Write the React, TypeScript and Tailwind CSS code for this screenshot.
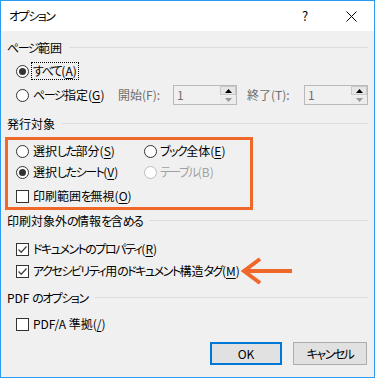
import React from "react";

const jp = (s: string) =>
  s.split(/([\u3040-\u30ff]+)/).map((p, i) =>
    i % 2 === 1 ? (
      <span key={i} className="tracking-[-1.5px]">
        {p}
      </span>
    ) : (
      <React.Fragment key={i}>{p}</React.Fragment>
    )
  );

const Radio = ({ checked = false, disabled = false }: { checked?: boolean; disabled?: boolean }) => (
  <span
    className={`flex h-[13px] w-[13px] shrink-0 items-center justify-center rounded-full border bg-white ${
      disabled ? "border-[#bcbcbc]" : "border-[#333333]"
    }`}
  >
    {checked && <span className="h-[7px] w-[7px] rounded-full bg-[#333333]" />}
  </span>
);

const Check = ({ checked = false }: { checked?: boolean }) => (
  <span className="flex h-[13px] w-[13px] shrink-0 items-center justify-center border border-[#333333] bg-white">
    {checked && (
      <svg width="11" height="11" viewBox="0 0 11 11">
        <polyline points="1.5,5.5 4.2,8.2 9.5,2.5" fill="none" stroke="#444" strokeWidth="1.3" />
      </svg>
    )}
  </span>
);

const U = ({ children }: { children: React.ReactNode }) => (
  <span className="underline decoration-1 underline-offset-[2px]">{children}</span>
);

const Header = ({ text, className = "" }: { text: string; className?: string }) => (
  <div className={`flex h-[16px] items-start ${className}`}>
    <span className="whitespace-nowrap">{jp(text)}</span>
    <span className="ml-[7px] mt-[7px] h-px flex-1 bg-[#dcdcdc]" />
  </div>
);

const Spin = () => (
  <div className="flex h-[20px] w-[64px] border border-[#b9b9b9] bg-[#f0f0f0]">
    <span className="flex-1 pl-[3px] pt-[1px] text-[#6d6d6d]">1</span>
    <div className="flex w-[16px] flex-col gap-px">
      <div className="flex h-[9px] items-center justify-center border border-[#c9c9c9] bg-[#e6e6e6]">
        <svg width="7" height="4" viewBox="0 0 7 4">
          <polygon points="0,4 7,4 3.5,0" fill="#000" />
        </svg>
      </div>
      <div className="flex h-[8px] items-center justify-center bg-[#ececec]">
        <svg width="7" height="4" viewBox="0 0 7 4">
          <polygon points="0,0 7,0 3.5,4" fill="#9a9a9a" />
        </svg>
      </div>
    </div>
  </div>
);

export default function App() {
  return (
    <div className="relative h-[378px] w-[375px] overflow-hidden border border-[#2b9bf2] bg-[#f0f0f0] font-['Noto_Sans_CJK_JP',sans-serif] text-[12px] leading-[16px] text-black [font-feature-settings:'palt']">
      {/* title bar */}
      <div className="flex h-[30px] items-center bg-white">
        <span className="pl-[8px]">{jp("オプション")}</span>
        <div className="ml-auto flex h-full">
          <div className="flex w-[46px] items-center justify-center text-[13px]">?</div>
          <div className="flex w-[46px] items-center justify-center">
            <svg width="11" height="11" viewBox="0 0 11 11">
              <path d="M0.5 0.5 L10.5 10.5 M10.5 0.5 L0.5 10.5" stroke="#000" strokeWidth="1" />
            </svg>
          </div>
        </div>
      </div>

      {/* body */}
      <div className="flex flex-col px-[6px]">
        <Header className="mt-[9px]" text="ページ範囲" />

        <div className="mt-[5px] flex h-[20px] items-center pl-[9px]">
          <Radio checked />
          <span className="ml-[2px] border border-dotted border-black px-[1px] leading-[16px]">
            {jp("すべて(")}
            <U>A</U>)
          </span>
        </div>

        <div className="mt-[4px] flex h-[20px] items-center pl-[9px]">
          <Radio />
          <span className="ml-[4px] w-[85px] whitespace-nowrap">
            {jp("ページ指定(")}
            <U>G</U>)
          </span>
          <span className="w-[55px] whitespace-nowrap text-[#6d6d6d]">開始(F):</span>
          <Spin />
          <span className="ml-[10px] w-[57px] whitespace-nowrap text-[#6d6d6d]">終了(T):</span>
          <Spin />
        </div>

        <Header className="mt-[11px]" text="発行対象" />

        <div className="mt-[9px] flex h-[20px] items-center pl-[9px]">
          <Radio />
          <span className="ml-[4px] w-[111px] whitespace-nowrap">
            {jp("選択した部分(")}
            <U>S</U>)
          </span>
          <Radio />
          <span className="ml-[3px] whitespace-nowrap">
            {jp("ブック全体(")}
            <U>E</U>)
          </span>
        </div>

        <div className="mt-[1px] flex h-[20px] items-center pl-[9px]">
          <Radio checked />
          <span className="ml-[4px] w-[111px] whitespace-nowrap">
            {jp("選択したシート(")}
            <U>V</U>)
          </span>
          <Radio disabled />
          <span className="ml-[3px] whitespace-nowrap text-[#a0a0a0]">{jp("テーブル(B)")}</span>
        </div>

        <div className="mt-[4px] flex h-[20px] items-center pl-[9px]">
          <Check />
          <span className="ml-[4px] whitespace-nowrap">
            {jp("印刷範囲を無視(")}
            <U>O</U>)
          </span>
        </div>

        <Header className="mt-[7px]" text="印刷対象外の情報を含める" />

        <div className="mt-[10px] flex h-[20px] items-center pl-[9px]">
          <Check checked />
          <span className="ml-[4px] whitespace-nowrap">
            {jp("ドキュメントのプロパティ(")}
            <U>R</U>)
          </span>
        </div>

        <div className="mt-[2px] flex h-[20px] items-center pl-[9px]">
          <Check checked />
          <span className="ml-[4px] whitespace-nowrap">
            {jp("アクセシビリティ用のドキュメント構造タグ(")}
            <U>M</U>)
          </span>
        </div>

        <Header className="mt-[9px]" text="PDF のオプション" />

        <div className="mt-[8px] flex h-[20px] items-center pl-[9px]">
          <Check />
          <span className="ml-[4px] whitespace-nowrap">
            PDF/A 準拠(<U>/</U>)
          </span>
        </div>

        <div className="mr-[1px] mt-[8px] flex justify-end gap-[11px]">
          <button className="flex h-[23px] w-[72px] items-center justify-center border-2 border-[#0078d7] bg-[#e1e1e1]">
            OK
          </button>
          <button className="flex h-[23px] w-[74px] items-center justify-center border border-[#adadad] bg-[#e1e1e1]">
            {jp("キャンセル")}
          </button>
        </div>
      </div>

      {/* annotations */}
      <div className="pointer-events-none absolute left-[4px] top-[136px] h-[73px] w-[248px] border-[3px] border-[#f0672a]" />
      <svg
        className="pointer-events-none absolute left-[239px] top-[255px]"
        width="54"
        height="30"
        viewBox="0 0 54 30"
      >
        <line x1="4" y1="15" x2="52" y2="15" stroke="#f0672a" strokeWidth="4" />
        <polyline points="20,3 4,15 20,27" fill="none" stroke="#f0672a" strokeWidth="4" strokeLinejoin="miter" />
      </svg>
    </div>
  );
}
